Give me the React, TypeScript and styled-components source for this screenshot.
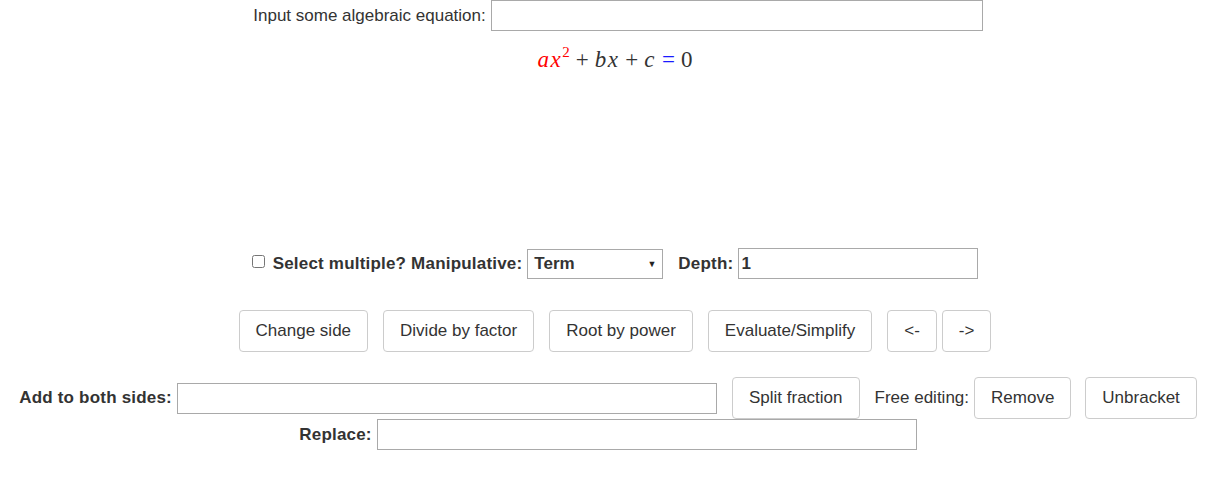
import React, { useState } from "react";
import styled, { createGlobalStyle } from "styled-components";

const GlobalStyle = createGlobalStyle`
  html, body {
    margin: 0;
    padding: 0;
    background: #fff;
  }
  body {
    font-family: "Liberation Sans", Arial, sans-serif;
    font-size: 17px;
    color: #333;
  }
`;

const Page = styled.div`
  width: 1216px;
  display: flex;
  flex-direction: column;
  align-items: center;
`;

const Row = styled.div<{ mt?: number; shift?: number }>`
  display: flex;
  align-items: center;
  justify-content: center;
  margin-top: ${({ mt }) => mt || 0}px;
  margin-left: ${({ shift }) => shift || 0}px;
`;

const Label = styled.label<{ bold?: boolean }>`
  font-weight: ${({ bold }) => (bold ? 700 : 400)};
  letter-spacing: ${({ bold }) => (bold ? "0.2px" : "0")};
  white-space: nowrap;
  margin-right: 5px;
`;

const TextBox = styled.input<{ w: number; h?: number }>`
  box-sizing: border-box;
  width: ${({ w }) => w}px;
  height: ${({ h }) => h || 31}px;
  border: 1px solid #a9a9a9;
  padding: 1px 2px;
  font-family: "Liberation Sans", Arial, sans-serif;
  font-size: 17px;
  font-weight: 700;
  color: #333;
  outline: none;
`;

const Equation = styled.div`
  margin-top: 16px;
  margin-left: 14px;
  font-family: "Liberation Serif", "DejaVu Serif", serif;
  font-size: 23px;
  color: #333;
  white-space: nowrap;
`;

const Var = styled.i<{ color?: string }>`
  color: ${({ color }) => color || "#333"};
  letter-spacing: 1.5px;
`;

const Op = styled.span<{ color?: string }>`
  color: ${({ color }) => color || "#333"};
  margin: 0 6px;
`;

const Sup = styled.sup<{ color?: string }>`
  color: ${({ color }) => color || "#333"};
  font-size: 15px;
  font-style: normal;
  vertical-align: 10px;
  line-height: 0;
`;

const Check = styled.input`
  width: 13px;
  height: 13px;
  margin: 0 8px 4px 0;
  accent-color: #ddd;
`;

const SelectBox = styled.div`
  box-sizing: border-box;
  width: 136px;
  height: 30px;
  border: 1px solid #a9a9a9;
  display: flex;
  align-items: center;
  justify-content: space-between;
  padding: 0 6px 0 6px;
  font-weight: 700;
  margin-right: 15px;
`;

const Caret = styled.span`
  font-size: 9px;
  color: #222;
`;

const Button = styled.button<{ gap?: number }>`
  box-sizing: border-box;
  height: 42px;
  padding: 0 16px;
  margin-right: ${({ gap }) => (gap === undefined ? 15 : gap)}px;
  background: #fff;
  border: 1px solid #ccc;
  border-radius: 4px;
  font-family: "Liberation Sans", Arial, sans-serif;
  font-size: 17px;
  color: #333;
  cursor: pointer;
  &:last-child {
    margin-right: 0;
  }
`;

const Bottom = styled.div`
  margin-top: 25px;
  display: flex;
  flex-direction: column;
  align-items: center;
`;

export default function App() {
  const [depth, setDepth] = useState("1");
  return (
    <>
      <GlobalStyle />
      <Page>
        <Row shift={20}>
          <Label>Input some algebraic equation:</Label>
          <TextBox w={492} h={31} />
        </Row>
        <Equation>
          <Var color="#ff0000">ax</Var>
          <Sup color="#ff0000">2</Sup>
          <Op>+</Op>
          <Var>bx</Var>
          <Op>+</Op>
          <Var>c</Var>
          <Op color="#1a1aff">=</Op>
          <span>0</span>
        </Equation>
        <Row mt={175} shift={14}>
          <Check type="checkbox" />
          <Label bold>Select multiple? Manipulative:</Label>
          <SelectBox>
            <span>Term</span>
            <Caret>▼</Caret>
          </SelectBox>
          <Label bold>Depth:</Label>
          <TextBox w={240} h={31} value={depth} onChange={(e) => setDepth(e.target.value)} />
        </Row>
        <Row mt={31} shift={14}>
          <Button>Change side</Button>
          <Button>Divide by factor</Button>
          <Button>Root by power</Button>
          <Button>Evaluate/Simplify</Button>
          <Button gap={5}>&lt;-</Button>
          <Button>-&gt;</Button>
        </Row>
        <Bottom>
          <Row>
            <Label bold>Add to both sides:</Label>
            <TextBox w={540} h={31} style={{ fontWeight: 400 }} />
            <Button style={{ marginLeft: 15 }}>Split fraction</Button>
            <Label>Free editing:</Label>
            <Button gap={14}>Remove</Button>
            <Button>Unbracket</Button>
          </Row>
          <Row>
            <Label bold>Replace:</Label>
            <TextBox w={540} h={31} />
          </Row>
        </Bottom>
      </Page>
    </>
  );
}
